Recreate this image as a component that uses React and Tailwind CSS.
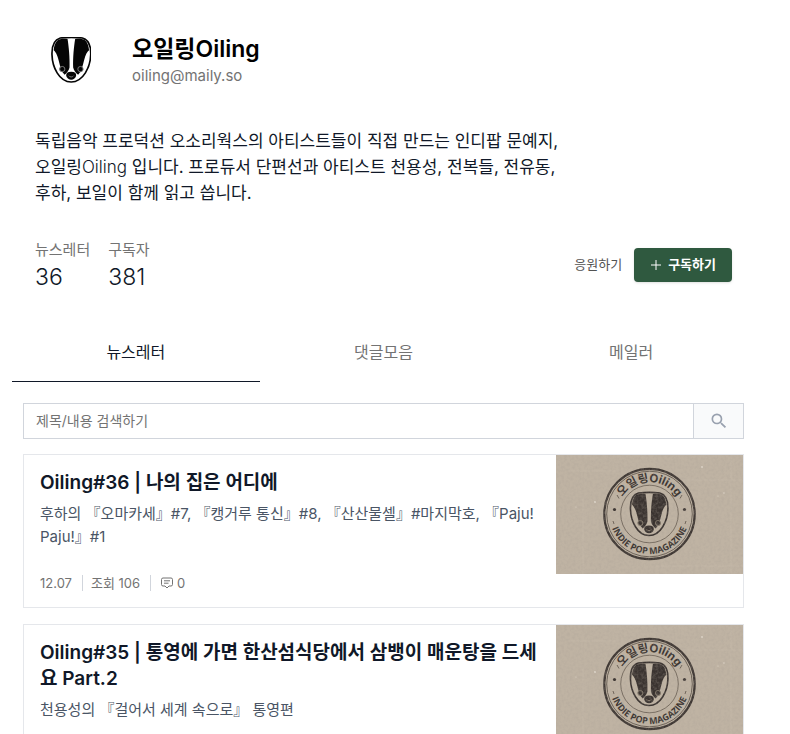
import React, { useState } from "react";
import { MdSearch } from "react-icons/md";

const tabs = ["뉴스레터", "댓글모음", "메일러"];

const stats = [
  { label: "뉴스레터", value: 36 },
  { label: "구독자", value: 381 },
];

const posts = [
  {
    id: 36,
    title: "Oiling#36 | 나의 집은 어디에",
    summary:
      "후하의 『오마카세』#7, 『캥거루 통신』#8, 『산산물셀』#마지막호, 『Paju! Paju!』#1",
    meta: { date: "12.07", views: 106, comments: 0 },
  },
  {
    id: 35,
    title: "Oiling#35 | 통영에 가면 한산섬식당에서 삼뱅이 매운탕을 드세요 Part.2",
    summary: "천용성의 『걸어서 세계 속으로』 통영편",
  },
];

// badger head, drawn in a 123x139 box
const Badger = ({ ink, paper, eye }) => (
  <g>
    <path
      d="M28 3C45 1 78 1 95 3C113 8 121 28 120 54C119 90 98 136 61 136C24 136 4 90 3 54C2 28 10 8 28 3Z"
      fill={paper}
      stroke={ink}
      strokeWidth="5"
    />
    <path
      d="M18 12C24 5 38 5 50 6C54 30 57 62 56 92C54 102 47 109 41 114C32 105 28 90 23 70C19 53 13 44 8 40C9 28 12 18 18 12Z"
      fill={ink}
    />
    <path
      d="M105 12C99 5 85 5 73 6C69 30 66 62 67 92C69 102 76 109 82 114C91 105 95 90 100 70C104 53 110 44 115 40C114 28 111 18 105 12Z"
      fill={ink}
    />
    <circle cx="34" cy="97" r="8" fill={ink} stroke={eye} strokeWidth="3" />
    <circle cx="89" cy="97" r="8" fill={ink} stroke={eye} strokeWidth="3" />
    <path
      d="M61 105C72 105 77 110 76 117C75 124 68 129 61 129C54 129 47 124 46 117C45 110 50 105 61 105Z"
      fill={ink}
    />
    <path d="M54 117C56 122 66 122 68 117" fill="none" stroke={eye} strokeWidth="3" />
  </g>
);

const Thumbnail = ({ id }) => (
  <svg
    viewBox="0 0 187 119"
    className="block w-full bg-[#bcb09f]"
    role="img"
    aria-label="오일링Oiling"
  >
    <defs>
      <filter id={`paper-${id}`} x="0" y="0" width="100%" height="100%">
        <feTurbulence type="fractalNoise" baseFrequency="0.35" numOctaves="3" seed="4" />
        <feColorMatrix values="0 0 0 0 0.4  0 0 0 0 0.35  0 0 0 0 0.3  0.6 0 0 0 -0.22" />
      </filter>
      <path id={`top-${id}`} d="M61.5 59A32 32 0 0 1 125.5 59" />
      <path id={`bottom-${id}`} d="M53.5 59A40 40 0 0 0 133.5 59" />
    </defs>
    <rect width="187" height="119" fill="#bfb3a3" />
    <g stroke="#cfc4b5" strokeWidth="0.5" opacity="0.6">
      <path d="M12 16H60M118 25H187M175 0V119M27 40V119M100 111H187" />
    </g>
    <g fill="#ddd4c8">
      <circle cx="146" cy="12" r="0.9" />
      <circle cx="39" cy="47" r="1" />
      <circle cx="168" cy="38" r="0.8" />
      <circle cx="162" cy="41" r="0.6" />
      <circle cx="20" cy="52" r="0.6" />
    </g>
    <circle cx="93.5" cy="59" r="45.2" fill="none" stroke="#3e3733" strokeWidth="2.2" />
    <circle cx="93.5" cy="59" r="42.8" fill="none" stroke="#51483f" strokeWidth="0.8" />
    <circle cx="93.5" cy="59" r="28.8" fill="none" stroke="#574d44" strokeWidth="0.7" />
    <g fill="#3a3330">
      <circle cx="58.5" cy="54.5" r="1.6" />
      <circle cx="128.5" cy="54.5" r="1.6" />
    </g>
    <path
      d="M61 40L63 43.500M126 40L124 43.500M57 66L58 69M130 66L129 69"
      stroke="#574d44"
      strokeWidth="0.8"
    />
    <text
      fill="#3a3330"
      fontSize="11.5"
      textAnchor="middle"
      className="font-['Inter','Noto_Sans_CJK_KR',sans-serif] font-bold"
    >
      <textPath href={`#top-${id}`} startOffset="50%">
        오일링Oiling
      </textPath>
    </text>
    <text
      fill="#3a3330"
      fontSize="9"
      textAnchor="middle"
      className="font-['Open_Sans',sans-serif] font-bold"
    >
      <textPath href={`#bottom-${id}`} startOffset="50%">
        INDIE POP MAGAZINE
      </textPath>
    </text>
    <g transform="translate(73.5 37) scale(0.32)">
      <Badger ink="#3a3330" paper="#bfb3a3" eye="#83786b" />
    </g>
    <rect width="187" height="119" filter={`url(#paper-${id})`} />
  </svg>
);

const CommentIcon = () => (
  <svg
    viewBox="0 0 12 12"
    className="size-3"
    fill="none"
    stroke="currentColor"
    strokeLinejoin="round"
    aria-hidden="true"
  >
    <path d="M2 1H10Q11.500 1 11.500 2.500V7.500Q11.500 9 10 9H8L6 11L4 9H2Q0.500 9 0.500 7.500V2.500Q0.500 1 2 1Z" />
    <path d="M3 3.800H9M3 6.200H7.500" />
  </svg>
);

const PostCard = ({ post: { id, title, summary, meta } }) => (
  <a href="#" className="flex items-start border border-gray-200">
    <div className="flex-1 min-w-0 px-4 pt-[15px] pb-3.5">
      <h2 className="text-[19px] leading-[26px] font-semibold text-gray-900">{title}</h2>
      <p className="mt-1.5 text-[15px] leading-[23px] text-gray-600">{summary}</p>
      {meta && (
        <div className="mt-[25px] flex items-center text-[13px] leading-5 text-neutral-500">
          <span className="pr-2.5">{meta.date}</span>
          <span className="h-4 border-l border-gray-300 pl-2 pr-2.5 leading-4">
            조회 {meta.views}
          </span>
          <span className="h-4 flex items-center gap-1 border-l border-gray-300 pl-2.5">
            <CommentIcon /> {meta.comments}
          </span>
        </div>
      )}
    </div>
    <div className="w-[187px] shrink-0">
      <Thumbnail id={id} />
    </div>
  </a>
);

const App = () => {
  const [activeTab, setActiveTab] = useState(tabs[0]);
  const [query, setQuery] = useState("");

  return (
    <main
      lang="ko"
      className="min-h-screen bg-white pl-3 pr-[35px] font-['Inter','Noto_Sans_CJK_KR',sans-serif]"
    >
      <header className="px-[23px] pt-6">
        <div className="flex items-center gap-[25px]">
          <div className="size-[72px] flex items-center justify-center">
            <svg viewBox="0 0 123 139" className="h-[46px]" role="img" aria-label="오일링Oiling">
              <Badger ink="#050505" paper="#ffffff" eye="#777777" />
            </svg>
          </div>
          <div>
            <h1 className="text-[23px] leading-8 font-semibold text-black">오일링Oiling</h1>
            <p className="text-[15px] leading-[22px] text-neutral-500">oiling@maily.so</p>
          </div>
        </div>

        <p className="mt-8 max-w-[540px] text-[17px] leading-[26px] break-keep text-gray-900">
          독립음악 프로덕션 오소리웍스의 아티스트들이 직접 만드는 인디팝 문예지, 오일링
          <span className="font-light">Oiling</span> 입니다. 프로듀서 단편선과 아티스트 천용성,
          전복들, 전유동, 후하, 보일이 함께 읽고 씁니다.
        </p>

        <div className="mt-8 flex items-center justify-between">
          <dl className="flex gap-[18px]">
            {stats.map(({ label, value }) => (
              <div key={label}>
                <dt className="text-[15px] leading-6 text-neutral-500">{label}</dt>
                <dd className="text-[23px] leading-[30px] font-light text-gray-900">{value}</dd>
              </div>
            ))}
          </dl>
          <div className="flex items-center gap-3">
            <button type="button" className="text-[13px] text-neutral-600">
              응원하기
            </button>
            <button
              type="button"
              className="h-[34px] flex items-center gap-1.5 rounded bg-[#2f593f] px-4 text-[13px] font-bold text-white shadow-sm"
            >
              <svg viewBox="0 0 12 12" className="size-3" stroke="currentColor" aria-hidden="true">
                <path d="M6 1V11M1 6H11" />
              </svg>
              구독하기
            </button>
          </div>
        </div>
      </header>

      <nav className="mt-[31px] grid grid-cols-3">
        {tabs.map((tab) => (
          <button
            key={tab}
            type="button"
            onClick={() => setActiveTab(tab)}
            className={`h-[59px] border-b text-base ${
              tab === activeTab
                ? "border-gray-900 text-gray-900"
                : "border-transparent text-neutral-500"
            }`}
          >
            {tab}
          </button>
        ))}
      </nav>

      <section className="px-[11px] pt-[21px]">
        <form
          className="flex h-9 border border-gray-300"
          onSubmit={(e) => e.preventDefault()}
        >
          <input
            type="search"
            aria-label="제목/내용 검색하기"
            placeholder="제목/내용 검색하기"
            value={query}
            onChange={(e) => setQuery(e.target.value)}
            className="flex-1 min-w-0 px-3 text-sm placeholder-neutral-500 focus:outline-none"
          />
          <button
            type="submit"
            aria-label="검색"
            className="w-[50px] flex items-center justify-center border-l border-gray-300 bg-gray-50 text-gray-400"
          >
            <MdSearch size={20} />
          </button>
        </form>

        <div className="mt-[15px] space-y-4">
          {posts.map((post) => (
            <PostCard key={post.id} post={post} />
          ))}
        </div>
      </section>
    </main>
  );
};

export default App;
